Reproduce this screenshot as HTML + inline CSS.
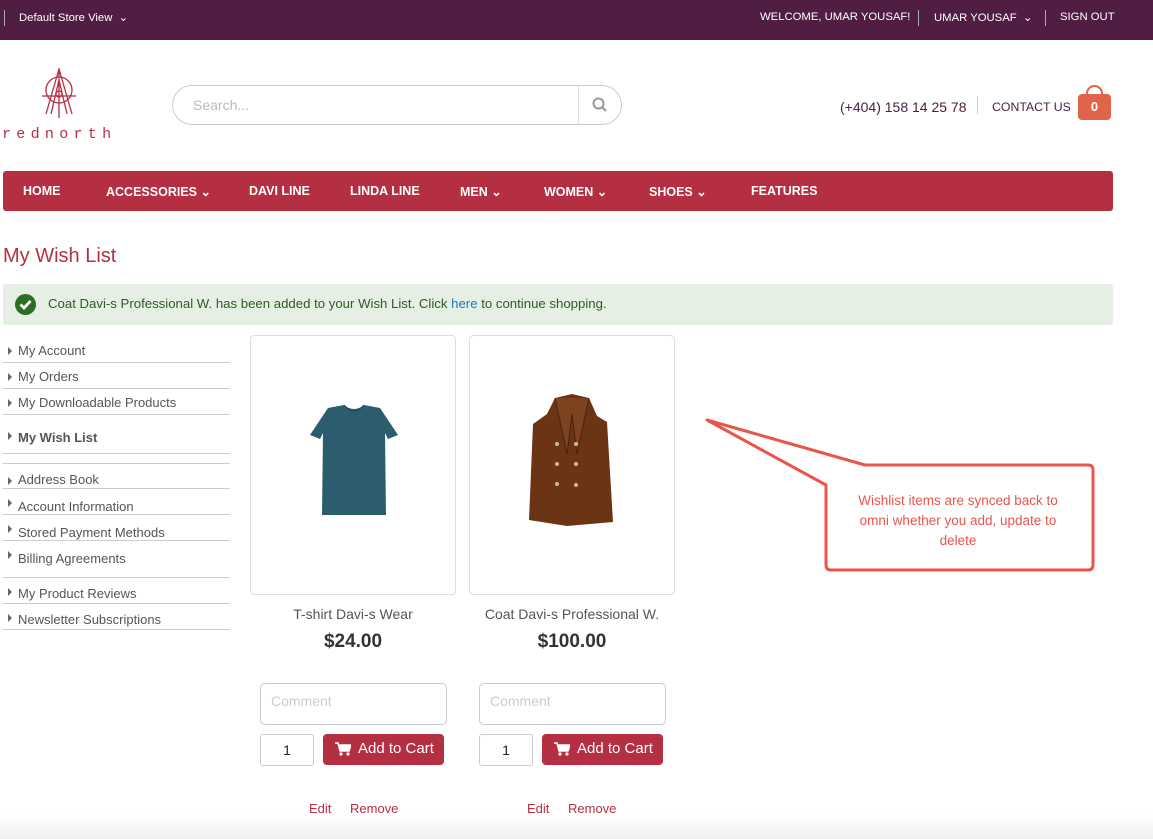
<!DOCTYPE html>
<html><head><meta charset="utf-8"><style>
*{margin:0;padding:0;box-sizing:border-box}
body{width:1153px;height:839px;overflow:hidden;background:#fff;font-family:"Liberation Sans",Arial,sans-serif;position:relative;color:#333}
.a{position:absolute}
.top{left:0;top:0;width:1153px;height:40px;background:#511d42;color:#fff;font-size:11.3px}
.nav{left:3px;top:171px;width:1110px;height:40px;background:#b52f42;border-radius:3px}
.nav span{position:absolute;top:13px;color:#fff;font-weight:bold;font-size:12.5px}
.side{left:3px;width:227px;font-size:13px;color:#555;border-bottom:1px solid #ccc;height:26px;padding:6px 0 0 15px}
.side:before{content:"";position:absolute;left:5px;top:10px;border-left:4px solid #666;border-top:4px solid transparent;border-bottom:4px solid transparent}
.card{top:335px;width:206px;height:260px;border:1px solid #ddd;border-radius:4px}
.name{font-size:14px;color:#555;text-align:center;width:206px}
.price{font-size:19px;font-weight:bold;color:#333;text-align:center;width:206px}
.cm{width:187px;height:42px;border:1px solid #ccc;border-radius:5px;color:#ccc;font-size:14px;padding:9px 10px}
.qty{width:54px;height:32px;border:1px solid #ccc;border-radius:3px;font-size:14px;text-align:center;padding-top:7px;color:#222}
.btn{width:121px;height:31px;background:#b52f42;border-radius:4px;color:#fff;font-size:15px;padding:6px 0 0 35px}
.btn svg{position:absolute;left:12px;top:8px}
.lk{font-size:13px;color:#b52f42}
</style></head><body>
<div class="a top">
<div class="a" style="left:4px;top:10px;width:1px;height:16px;background:#aaa"></div>
<div class="a" style="left:19px;top:11px">Default Store View &nbsp;⌄</div>
<div class="a" style="left:760px;top:11px">WELCOME, UMAR YOUSAF!</div>
<div class="a" style="left:918px;top:10px;width:1px;height:16px;background:#aaa"></div>
<div class="a" style="left:934px;top:11px">UMAR YOUSAF &nbsp;⌄</div>
<div class="a" style="left:1045px;top:10px;width:1px;height:16px;background:#aaa"></div>
<div class="a" style="left:1060px;top:11px">SIGN OUT</div>
</div>
<svg class="a" style="left:38px;top:66px" width="42" height="54" viewBox="0 0 42 54" fill="none" stroke="#b52f42" stroke-width="1.3">
<path d="M21 2V52M4 30H38M21 3L8 48M21 3L34 48M21 14L13 48M21 14L29 48"/><circle cx="21" cy="24" r="13"/><circle cx="21" cy="28" r="3"/></svg>
<div class="a" style="left:2px;top:126px;font-family:'Liberation Mono',monospace;font-size:15px;letter-spacing:5.3px;color:#b52f42">rednorth</div>
<div class="a" style="left:172px;top:85px;width:450px;height:40px;border:1px solid #ccc;border-radius:20px"></div>
<div class="a" style="left:578px;top:86px;width:1px;height:38px;background:#ddd"></div>
<div class="a" style="left:193px;top:97px;color:#bbb;font-size:14px">Search...</div>
<svg class="a" style="left:592px;top:97px" width="16" height="16" fill="none" stroke="#999" stroke-width="2"><circle cx="6.5" cy="6.5" r="5"/><path d="M10 10L14 14"/></svg>
<div class="a" style="left:840px;top:99px;font-size:14px;color:#4a2140">(+404) 158 14 25 78</div>
<div class="a" style="left:977px;top:96px;width:1px;height:18px;background:#ccc"></div>
<div class="a" style="left:992px;top:100px;font-size:12.3px;color:#4a2140">CONTACT US</div>
<div class="a" style="left:1078px;top:94px;width:33px;height:26px;background:#e0644a;border-radius:4px;color:#fff;font-weight:bold;font-size:13px;text-align:center;padding-top:5px">0</div>
<div class="a" style="left:1086px;top:85px;width:17px;height:16px;border:2px solid #e0644a;border-bottom:none;border-radius:9px 9px 0 0"></div>
<div class="a nav">
<span style="left:20px">HOME</span><span style="left:103px">ACCESSORIES ⌄</span><span style="left:246px">DAVI LINE</span><span style="left:347px">LINDA LINE</span><span style="left:457px">MEN ⌄</span><span style="left:541px">WOMEN ⌄</span><span style="left:646px">SHOES ⌄</span><span style="left:748px">FEATURES</span>
</div>
<div class="a" style="left:3px;top:245px;font-size:20px;color:#b52f42">My Wish List</div>
<div class="a" style="left:3px;top:284px;width:1110px;height:41px;background:#e5efe4;border-radius:3px"></div>
<svg class="a" style="left:15px;top:294px" width="21" height="21"><circle cx="10.5" cy="10.5" r="10.5" fill="#2d6e25"/><path d="M5.5 10.5L9 14L15.5 7" stroke="#fff" stroke-width="2.8" fill="none"/></svg>
<div class="a" style="left:48px;top:296px;font-size:13.2px;color:#2d5c22">Coat Davi-s Professional W. has been added to your Wish List. Click <span style="color:#1979c3">here</span> to continue shopping.</div>
<div class="a side" style="top:337px">My Account</div>
<div class="a side" style="top:363px">My Orders</div>
<div class="a side" style="top:389px">My Downloadable Products</div>
<div class="a side" style="top:422px;height:32px;padding-top:8px;font-weight:bold">My Wish List</div>
<div class="a" style="left:3px;top:463px;width:227px;height:1px;background:#ccc"></div>
<div class="a side" style="top:467px;height:22px;padding-top:5px">Address Book</div>
<div class="a side" style="top:489px;padding-top:10px">Account Information</div>
<div class="a side" style="top:515px;padding-top:10px">Stored Payment Methods</div>
<div class="a side" style="top:541px;padding-top:10px;border:none">Billing Agreements</div>
<div class="a" style="left:3px;top:577px;width:227px;height:1px;background:#ccc"></div>
<div class="a side" style="top:578px;padding-top:8px">My Product Reviews</div>
<div class="a side" style="top:604px;padding-top:8px">Newsletter Subscriptions</div>
<div class="a card" style="left:250px"></div>
<div class="a card" style="left:469px"></div>
<svg class="a" style="left:308px;top:405px" width="92" height="112"><path d="M20 3L36 0Q46 8 56 0L72 3L90 30L80 34L77 28L78 110L14 110L15 28L12 34L2 30Z" fill="#2b5d6e"/><path d="M36 0Q46 12 56 0" stroke="#1e4654" fill="none"/></svg>
<svg class="a" style="left:527px;top:394px" width="90" height="134"><path d="M28 4L45 0L62 4L70 22L80 28L86 128L40 132L2 126L6 30L20 20Z" fill="#6b3515"/><path d="M28 4L40 60L45 20L50 60L62 4" stroke="#4a230c" fill="#7d4220"/><g fill="#c8b8a0"><circle cx="30" cy="50" r="2"/><circle cx="49" cy="50" r="2"/><circle cx="30" cy="70" r="2"/><circle cx="49" cy="70" r="2"/><circle cx="30" cy="90" r="2"/><circle cx="49" cy="91" r="2"/></g></svg>
<div class="a name" style="left:250px;top:606px">T-shirt Davi-s Wear</div>
<div class="a name" style="left:469px;top:606px">Coat Davi-s Professional W.</div>
<div class="a price" style="left:250px;top:631px">$24.00</div>
<div class="a price" style="left:469px;top:631px">$100.00</div>
<div class="a cm" style="left:260px;top:683px">Comment</div>
<div class="a cm" style="left:479px;top:683px">Comment</div>
<div class="a qty" style="left:260px;top:734px">1</div>
<div class="a qty" style="left:479px;top:734px">1</div>
<div class="a btn" style="left:323px;top:734px"><svg width="16" height="14"><path d="M0 1H3L5 9H14L16 3H4" fill="#fff" stroke="#fff" stroke-width="1.5"/><circle cx="6" cy="12" r="1.6" fill="#fff"/><circle cx="13" cy="12" r="1.6" fill="#fff"/></svg>Add to Cart</div>
<div class="a btn" style="left:542px;top:734px"><svg width="16" height="14"><path d="M0 1H3L5 9H14L16 3H4" fill="#fff" stroke="#fff" stroke-width="1.5"/><circle cx="6" cy="12" r="1.6" fill="#fff"/><circle cx="13" cy="12" r="1.6" fill="#fff"/></svg>Add to Cart</div>
<div class="a lk" style="left:309px;top:801px">Edit</div>
<div class="a lk" style="left:350px;top:801px">Remove</div>
<div class="a lk" style="left:527px;top:801px">Edit</div>
<div class="a lk" style="left:568px;top:801px">Remove</div>
<div class="a" style="left:0;top:815px;width:1153px;height:24px;background:linear-gradient(#fff,#f0f0f0)"></div>
<svg class="a" style="left:700px;top:415px" width="400" height="160"><path d="M165 50L388 50Q393 50 393 55L393 150Q393 155 388 155L131 155Q126 155 126 150L126 70L7 5Z" fill="#fff" stroke="#e9554a" stroke-width="3" stroke-linejoin="round"/></svg>
<div class="a" style="left:850px;top:491px;width:216px;text-align:center;font-size:13.5px;line-height:20px;color:#e9554a">Wishlist items are synced back to omni whether you add, update to delete</div>
</body></html>
